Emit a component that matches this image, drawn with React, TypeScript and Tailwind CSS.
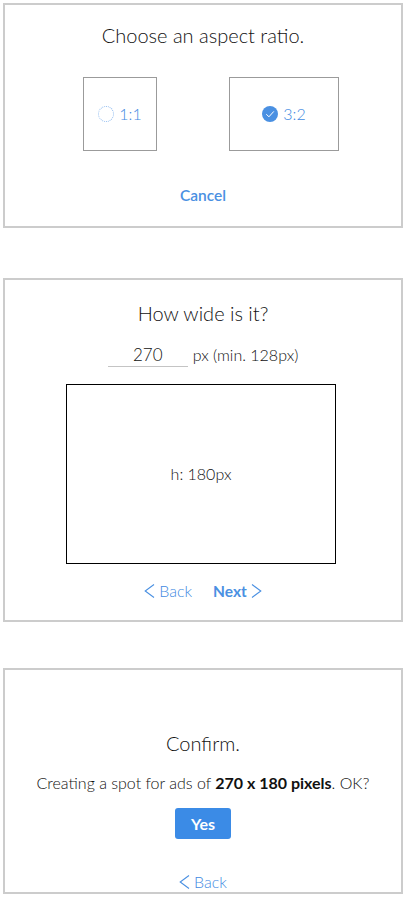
import React from "react";

const Chevron = ({ dir }: { dir: "left" | "right" }) => (
  <svg width="11" height="16" viewBox="0 0 11 16" className="inline-block">
    {dir === "left" ? (
      <polyline points="10,1.5 1.2,8 10,14.5" fill="none" stroke="#4a90e2" strokeWidth="1.1" />
    ) : (
      <polyline points="1,1.5 9.8,8 1,14.5" fill="none" stroke="#4a90e2" strokeWidth="1.1" />
    )}
  </svg>
);

export default function App() {
  return (
    <div
      className="w-[407px] h-[898px] bg-white text-[#111] overflow-hidden font-light"
      style={{ fontFamily: "Lato, 'Noto Sans', sans-serif" }}
    >
      {/* Card 1 */}
      <div className="ml-[3px] mt-[3px] w-[400px] h-[225px] border-2 border-[#cccccc] flex flex-col items-center pt-[16px]">
        <div className="text-[20px] leading-[28px] font-light text-[#111]">Choose an aspect ratio.</div>
        <div className="flex gap-[72px] mt-[28px] pl-[16px]">
          <div className="w-[74px] h-[74px] border border-[#9b9b9b] flex items-center justify-center gap-[5px]">
            <span className="w-[16px] h-[16px] rounded-full border-[1.5px] border-dotted border-[#8cb9ef]" />
            <span className="text-[16px] text-[#3f8ae2]">1:1</span>
          </div>
          <div className="w-[110px] h-[74px] border border-[#9b9b9b] flex items-center justify-center gap-[5px]">
            <svg width="16" height="16" viewBox="0 0 16 16">
              <circle cx="8" cy="8" r="8" fill="#4a90e2" />
              <polyline points="4.3,8.2 6.9,10.8 11.8,5.4" fill="none" stroke="#fff" strokeWidth="1" />
            </svg>
            <span className="text-[16px] text-[#3f8ae2]">3:2</span>
          </div>
        </div>
        <div className="mt-[34px] text-[15.5px] leading-[20px] font-semibold text-[#4a90e2]">Cancel</div>
      </div>

      {/* Card 2 */}
      <div className="ml-[3px] mt-[50px] w-[400px] h-[344px] border-2 border-[#cccccc] flex flex-col items-center pt-[19px]">
        <div className="text-[20px] leading-[28px] font-light text-[#111]">How wide is it?</div>
        <div className="flex items-end mt-[16px] text-[16px]">
          <div className="w-[80px] h-[24px] border-b border-[#c4c4c4] text-center leading-[24px] text-[17px] font-light">270</div>
          <div className="ml-[5px] leading-[24px]">px (min. 128px)</div>
        </div>
        <div className="mt-[17px] mr-[4px] w-[270px] h-[180px] border border-black flex items-center justify-center text-[16px]">
          h: 180px
        </div>
        <div className="mt-[17px] flex items-center text-[16px] leading-[20px] text-[#3f8ae2]">
          <span className="flex items-center gap-[4px]">
            <Chevron dir="left" />
            <span>Back</span>
          </span>
          <span className="ml-[21px] flex items-center gap-[4px] font-bold text-[15.5px] text-[#4a90e2]">
            <span>Next</span>
            <Chevron dir="right" />
          </span>
        </div>
      </div>

      {/* Card 3 */}
      <div className="ml-[3px] mt-[46px] w-[400px] h-[226px] border-2 border-[#cccccc] flex flex-col items-center pt-[59px] overflow-hidden">
        <div className="text-[20px] leading-[28px] font-light text-[#111]">Confirm.</div>
        <div className="mt-[16px] text-[16px] leading-[20px] whitespace-nowrap">
          Creating a spot for ads of <b className="font-bold">270 x 180 pixels</b>. OK?
        </div>
        <div className="mt-[15px] w-[56px] h-[32px] rounded-[3px] bg-[#3b8be6] text-white font-bold text-[16px] flex items-center justify-center">
          Yes
        </div>
        <div className="mt-[33px] flex items-center gap-[4px] text-[16px] leading-[20px] text-[#3f8ae2]">
          <Chevron dir="left" />
          <span>Back</span>
        </div>
      </div>
    </div>
  );
}
